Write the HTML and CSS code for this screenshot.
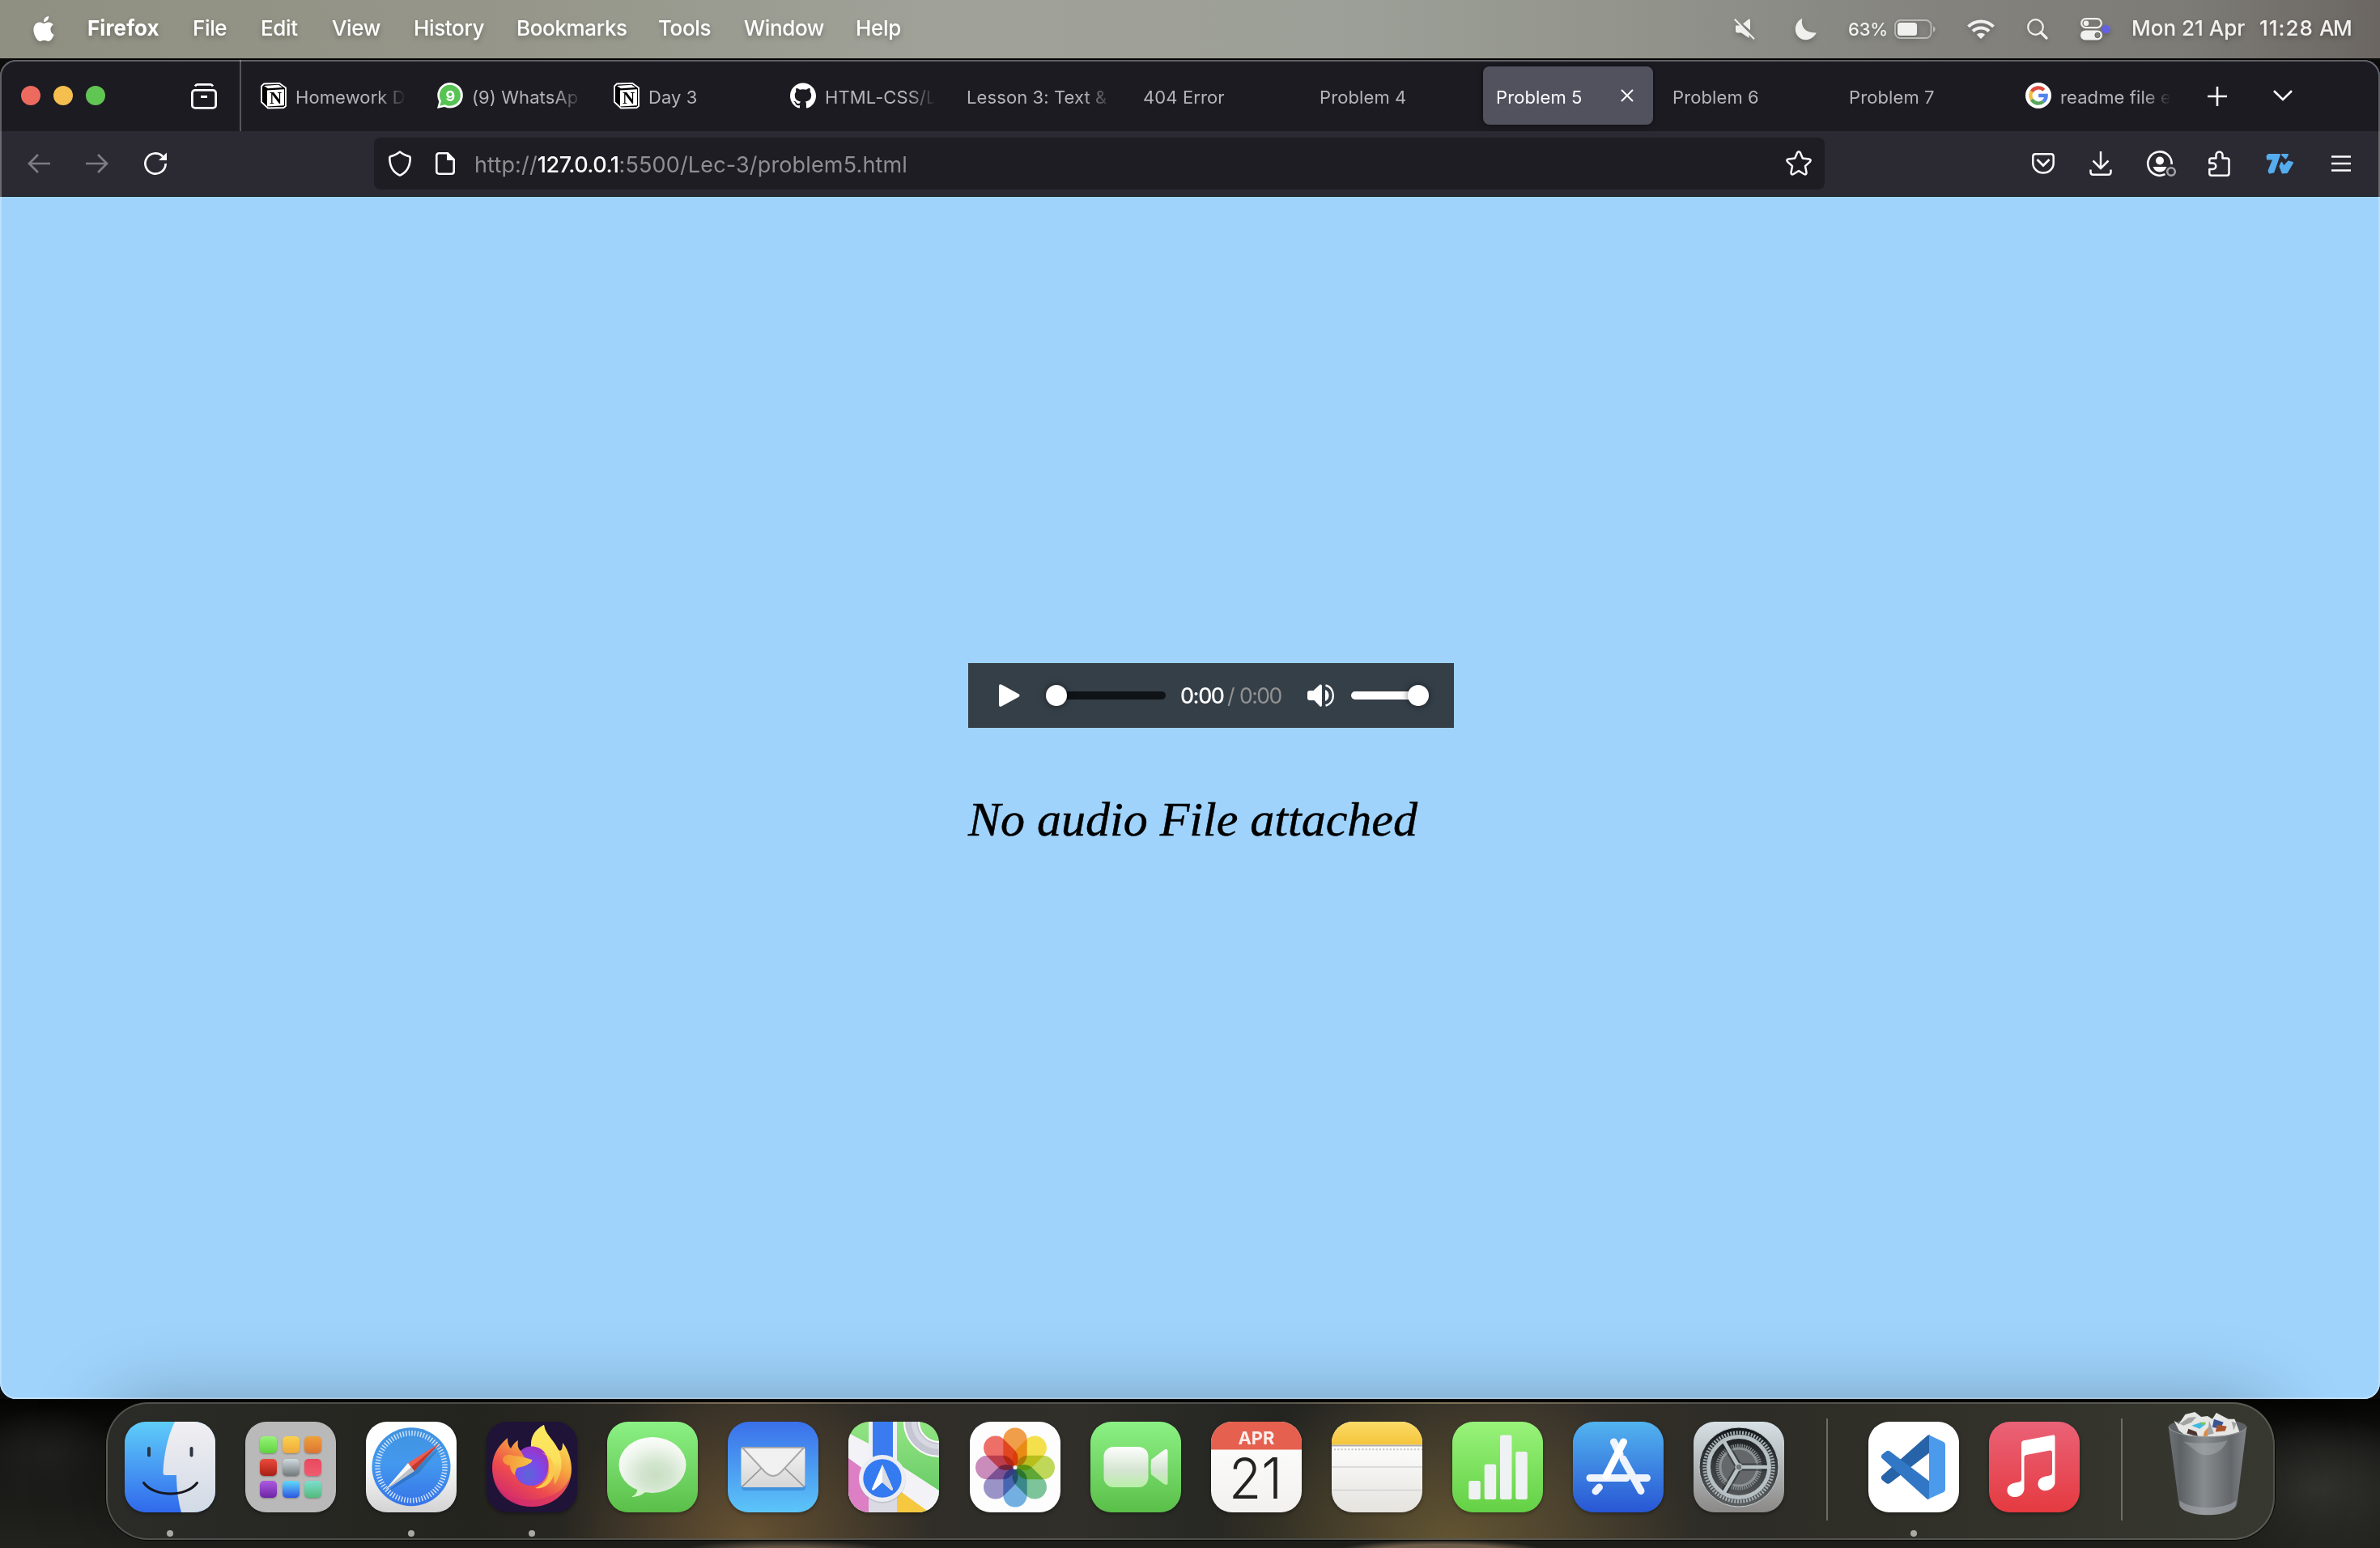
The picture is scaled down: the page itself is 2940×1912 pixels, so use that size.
FILE: index.html
```html
<!DOCTYPE html>
<html lang="en">
<head>
<meta charset="utf-8">
<title>Problem 5</title>
<link rel="stylesheet" href="styles.css">
</head>
<body>
<header class="menubar">
  <svg class="apple" viewBox="2 0 20 24" fill="#fff"><path d="M12.152 6.896c-.948 0-2.415-1.078-3.96-1.04-2.04.027-3.91 1.183-4.961 3.014-2.117 3.675-.546 9.103 1.519 12.09 1.013 1.454 2.208 3.09 3.792 3.039 1.52-.065 2.09-.987 3.935-.987 1.831 0 2.35.987 3.96.948 1.637-.026 2.676-1.48 3.676-2.948 1.156-1.688 1.636-3.325 1.662-3.415-.039-.013-3.182-1.221-3.22-4.857-.026-3.04 2.48-4.494 2.597-4.559-1.429-2.09-3.623-2.324-4.39-2.376-2-.156-3.675 1.09-4.61 1.09zM15.53 3.83c.843-1.012 1.4-2.427 1.245-3.83-1.207.052-2.662.805-3.532 1.818-.78.896-1.454 2.338-1.273 3.714 1.338.104 2.715-.688 3.559-1.701"/></svg>
  <nav class="menus">
    <span class="app-name">Firefox</span><span>File</span><span>Edit</span><span>View</span><span>History</span><span>Bookmarks</span><span>Tools</span><span>Window</span><span>Help</span>
  </nav>
  <div class="status">
    <svg class="mute" viewBox="0 0 26 26"><path d="M2 8.500H7.500L18.500 19.500V24L9 17.500H4.500Q2 17.500 2 15ZM11 6.500 18 .8Q20 0 20 2.500V14.500Z" fill="#f0f0ee"/><path d="M.8.8 25 25.200" stroke="#f0f0ee" stroke-width="2"/></svg>
    <svg class="moon" viewBox="0 0 28 28"><path d="M9.500.8C8.500 2 6 19 26.800 18.600 24 24 19.500 27.200 13.800 27.200 6.500 27.200.8 21.500.8 14.300.8 8.500 4 3 9.500.8Z" fill="#f0f0ee"/></svg>
    <span class="percent">63%</span>
    <svg class="battery" viewBox="0 0 52 24"><rect x="1" y="1" width="44.500" height="22" rx="6.500" fill="none" stroke="#b9b9b6" stroke-width="1.800"/><rect x="4" y="4" width="24" height="16" rx="3.500" fill="#f0f0ee"/><path d="M48 8.500C51.500 9.500 51.500 14.500 48 15.500Z" fill="#b9b9b6"/></svg>
    <svg class="wifi" viewBox="0 0 34 26" fill="none" stroke="#f0f0ee" stroke-width="4"><path d="M1.500 9.800A22 22 0 0 1 32.500 9.800"/><path d="M7 15.500A14.500 14.500 0 0 1 27 15.500"/><path d="M17 25 11.800 19.800A7.500 7.500 0 0 1 22.200 19.800Z" fill="#f0f0ee" stroke="none"/></svg>
    <svg class="search" viewBox="0 0 26 26" fill="none" stroke="#f0f0ee"><circle cx="10.500" cy="10.500" r="9.300" stroke-width="2.200"/><path d="M17 17 24 24" stroke-width="3.200" stroke-linecap="round"/></svg>
    <svg class="control" viewBox="0 0 38 28"><rect x="1.200" y="1.200" width="24.600" height="11" rx="5.500" fill="none" stroke="#f0f0ee" stroke-width="2.200"/><circle cx="7" cy="6.700" r="3.300" fill="#f0f0ee"/><rect y="15.500" width="27" height="12" rx="6" fill="#f0f0ee"/><circle cx="21" cy="21.500" r="3.200" fill="#83827d" stroke="#5d5c59" stroke-width=".8"/><circle cx="31.500" cy="14" r="5.200" fill="#6460e6"/></svg>
    <span class="date">Mon 21 Apr</span><span class="clock">11:28</span><span class="ampm">AM</span>
  </div>
</header>

<main class="window">
  <div class="tabbar">
    <div class="lights"><i class="red"></i><i class="yellow"></i><i class="green"></i></div>
    <svg class="fxview" viewBox="0 0 32 32" fill="none" stroke="#fbfbfe" stroke-width="2.800"><path d="M5 3.500Q6.200 1.400 8 1.400H24Q25.800 1.400 27 3.500" /><rect x="1.400" y="8.400" width="29.200" height="22" rx="3.500"/><path d="M12 16.500H20" stroke-width="3"/></svg>
    <div class="tabs">
      <div class="tab"><svg class="fav" viewBox="0 0 32 32"><path d="M1 4.500 4 1.500 23 .8 31 6.500V29L28.500 31 9 31.500 1 24Z" fill="#000" stroke="#fff" stroke-width="1.800" stroke-linejoin="round"/><path d="M8 9.500 29 8.300V28.300L8 29.500Z" fill="#fff"/><path d="M4 4 22 2.800 27 6 9 7.200Z" fill="#fff"/><text x="18.700" y="25.500" class="fav-n" text-anchor="middle">N</text></svg><span class="title">Homework D</span></div>
      <div class="tab"><svg class="fav" viewBox="0 0 32 32"><path d="M0 32 2.300 23.500A15.800 15.800 0 1 1 9 29.900Z" fill="#fff"/><path d="M3.300 28.800 5 22.800A13 13 0 1 1 9.800 27.200Z" fill="#57c353"/><text x="16.500" y="22.500" class="fav-9" text-anchor="middle">9</text></svg><span class="title">(9) WhatsAp</span></div>
      <div class="tab"><svg class="fav" viewBox="0 0 32 32"><path d="M1 4.500 4 1.500 23 .8 31 6.500V29L28.500 31 9 31.500 1 24Z" fill="#000" stroke="#fff" stroke-width="1.800" stroke-linejoin="round"/><path d="M8 9.500 29 8.300V28.300L8 29.500Z" fill="#fff"/><path d="M4 4 22 2.800 27 6 9 7.200Z" fill="#fff"/><text x="18.700" y="25.500" class="fav-n" text-anchor="middle">N</text></svg><span class="title">Day 3</span></div>
      <div class="tab"><svg class="fav" viewBox="0 0 24 24" fill="#fff"><path d="M12 .297c-6.630 0-12 5.373-12 12 0 5.303 3.438 9.800 8.205 11.385.6.113.82-.258.82-.577 0-.285-.01-1.040-.015-2.040-3.338.724-4.042-1.610-4.042-1.610C4.422 18.070 3.633 17.700 3.633 17.700c-1.087-.744.084-.729.084-.729 1.205.084 1.838 1.236 1.838 1.236 1.070 1.835 2.809 1.305 3.495.998.108-.776.417-1.305.76-1.605-2.665-.3-5.466-1.332-5.466-5.930 0-1.310.465-2.380 1.235-3.220-.135-.303-.54-1.523.105-3.176 0 0 1.005-.322 3.300 1.230.96-.267 1.980-.399 3-.405 1.020.006 2.040.138 3 .405 2.280-1.552 3.285-1.230 3.285-1.230.645 1.653.24 2.873.12 3.176.765.84 1.230 1.910 1.230 3.220 0 4.610-2.805 5.625-5.475 5.920.42.36.81 1.096.81 2.220 0 1.606-.015 2.896-.015 3.286 0 .315.21.69.825.57C20.565 22.092 24 17.592 24 12.297c0-6.627-5.373-12-12-12"/></svg><span class="title">HTML-CSS/L</span></div>
      <div class="tab"><span class="title">Lesson 3: Text &amp;</span></div>
      <div class="tab"><span class="title">404 Error</span></div>
      <div class="tab"><span class="title">Problem 4</span></div>
      <div class="tab active"><span class="title">Problem 5</span><svg class="close" viewBox="0 0 16 16" stroke="#fbfbfe" stroke-width="2"><path d="M1 1 15 15M15 1 1 15"/></svg></div>
      <div class="tab"><span class="title">Problem 6</span></div>
      <div class="tab"><span class="title">Problem 7</span></div>
      <div class="tab"><svg class="fav" viewBox="0 0 32 32" fill="none" stroke-width="4.400"><circle cx="16" cy="16" r="16" fill="#fff" stroke="none"/><path d="M22.800 9.200A9.600 9.600 0 0 0 7.700 11.200" stroke="#dc4b3e"/><path d="M7.700 11.200A9.600 9.600 0 0 0 7.700 20.800" stroke="#f2bd42"/><path d="M7.700 20.800A9.600 9.600 0 0 0 22.200 23.400" stroke="#58a55c"/><path d="M22.200 23.400A9.600 9.600 0 0 0 25.600 16H16.200" stroke="#5383ec"/></svg><span class="title">readme file e</span></div>
    </div>
    <svg class="plus" viewBox="0 0 24 24" stroke="#fbfbfe" stroke-width="2.600"><path d="M12 0V24M0 12H24"/></svg>
    <svg class="chev" viewBox="0 0 24 14" fill="none" stroke="#fbfbfe" stroke-width="2.600"><path d="M1 1.200 12 12 23 1.200"/></svg>
  </div>

  <div class="toolbar">
    <svg class="back" viewBox="0 0 28 24" fill="none" stroke="#7d7c82" stroke-width="2.700"><path d="M28 12H2M13 1 2 12 13 23"/></svg>
    <svg class="fwd" viewBox="0 0 28 24" fill="none" stroke="#7d7c82" stroke-width="2.700"><path d="M0 12H26M15 1 26 12 15 23"/></svg>
    <svg class="reload" viewBox="0 0 28 28" fill="none"><path d="M26.600 14A12.600 12.600 0 1 1 23 5.200" stroke="#fbfbfe" stroke-width="2.700"/><path d="M28 .5V10H18Z" fill="#fbfbfe"/></svg>
    <div class="urlbar">
      <svg class="shield" viewBox="0 0 28 32" fill="none" stroke="#fbfbfe" stroke-width="2.600"><path d="M14 1.500C18 4.500 22.500 6.500 25 7Q26.800 7.500 26.700 9.500C26.500 19 23.500 26.500 14 30.600 4.500 26.500 1.500 19 1.300 9.500Q1.200 7.500 3 7C5.500 6.500 10 4.500 14 1.500Z" stroke-linejoin="round"/></svg>
      <svg class="page" viewBox="0 0 24 28" fill="none" stroke="#fbfbfe" stroke-width="2.600"><path d="M4.300 1.300H15L22.700 9V23.700Q22.700 26.700 19.700 26.700H4.300Q1.300 26.700 1.300 23.700V4.300Q1.300 1.300 4.300 1.300Z"/><path d="M14.500 1V9.500H23Z" fill="#fbfbfe" stroke-width="1"/></svg>
      <span class="url">http://<b>127.0.0.1</b>:5500/Lec-3/problem5.html</span>
      <svg class="star" viewBox="0 0 32 31" fill="none" stroke="#fbfbfe" stroke-width="2.500" stroke-linejoin="round"><path d="M14.300 2.300Q16 0 17.700 2.300L20.800 9.600 28.700 10.500Q32 11.300 29.800 13.800L24 19.200 25.500 27Q25.500 30.500 22.500 29L16 25 9.500 29Q6.500 30.500 6.500 27L8 19.200 2.200 13.800Q0 11.300 3.300 10.500L11.200 9.600Z"/></svg>
    </div>
    <svg class="pocket" viewBox="0 0 28 26" fill="none" stroke="#fbfbfe" stroke-width="2.500"><path d="M4.500 1.300H23.500Q26.700 1.300 26.700 4.500V12.500A12.700 12 0 0 1 1.300 12.500V4.500Q1.300 1.300 4.500 1.300Z"/><path d="M6.500 8 14 15.500 21.500 8" stroke-width="2.800"/></svg>
    <svg class="download" viewBox="0 0 28 30" fill="none" stroke="#fbfbfe" stroke-width="2.500"><path d="M14 0V20M4.500 11.500 14 21 23.500 11.500M1.500 22.500V25.500Q1.500 28.700 4.500 28.700H23.500Q26.500 28.700 26.500 25.500V22.500"/></svg>
    <svg class="account" viewBox="0 0 36 32" fill="none"><path d="M30.600 17A14.700 14.700 0 1 0 22.500 29.200" stroke="#fbfbfe" stroke-width="2.600"/><circle cx="16" cy="12.500" r="5" fill="#fbfbfe"/><path d="M7.500 20H24.500Q22 26.500 16 26.500T7.500 20Z" fill="#fbfbfe"/><circle cx="30" cy="26" r="4.800" stroke="#a3a2a8" stroke-width="2.600"/></svg>
    <svg class="puzzle" viewBox="0 0 27 32" fill="none" stroke="#fbfbfe" stroke-width="2.500"><path d="M1.300 15.500V12Q1.300 9.500 3.800 9.500H9.500V5.500A4 4 0 0 1 17.500 5.500V9.500H23Q25.500 9.500 25.500 12V28Q25.500 30.700 23 30.700H3.800Q1.300 30.700 1.300 28V23H5.500A3.700 3.700 0 0 0 5.500 15.500Z" stroke-linejoin="round"/></svg>
    <svg class="ext" viewBox="0 0 34 26" fill="#55acee" stroke="#55acee" stroke-width="2" stroke-linejoin="round"><path d="M3 2H17L9.500 23.500 4.500 24.500 3.500 22 9.500 7.500H2L1.500 4Z"/><path d="M19.500 12 22 17 28 10.500 33 12 26 24 20.500 24.500 17.500 16.500Z"/><path d="M20 2H27L24.500 6.500Z"/></svg>
    <svg class="burger" viewBox="0 0 24 20" stroke="#fbfbfe" stroke-width="2.600"><path d="M0 1.500H24M0 10H24M0 18.500H24"/></svg>
  </div>

  <section class="page-body">
    <div class="player">
      <svg class="play" viewBox="0 0 26 28" fill="#fff"><path d="M3.500.8 24.500 12.300Q26.500 14 24.500 15.700L3.500 27.200Q0 29 0 25.500V2.500Q0-1 3.500.8Z"/></svg>
      <div class="scrub"><i></i></div>
      <span class="time">0:00</span><span class="dur">/</span><span class="dur total">0:00</span>
      <svg class="speaker" viewBox="0 0 33 28"><path d="M3 8H7.500L15.500.6Q18 0 18 2V26Q18 28.500 15.500 27.500L8.500 20H3Q0 20 0 17V11Q0 8 3 8Z" fill="#fff"/><path d="M22 7C28 9 28 19 22 21Z" fill="#fff"/><path d="M22.500 1.500C35 4 35 24 22.500 26.500" fill="none" stroke="#fff" stroke-width="2.400"/></svg>
      <div class="volume"><i></i></div>
    </div>
    <p class="message">No audio File attached</p>
  </section>
</main>

<footer class="dock-area">
  <div class="dock">
    <div class="app finder running"><svg viewBox="0 0 112 112"><defs><linearGradient id="fa" x2="0" y2="1"><stop stop-color="#5fcdf9"/><stop offset="1" stop-color="#3069ec"/></linearGradient><linearGradient id="fb" x2="0" y2="1"><stop stop-color="#f1eff2"/><stop offset="1" stop-color="#d1dae6"/></linearGradient></defs><rect width="112" height="112" fill="url(#fa)"/><path d="M62 0C52 20 48 45 47.500 63Q47.500 66 50 66H64C64 82 66 98 70 112H112V0Z" fill="url(#fb)"/><path d="M30 33V41.500M82.500 33V41.500" stroke="#2c3440" stroke-width="4" stroke-linecap="round"/><path d="M23.500 75.500C37 93.500 76 93.500 89.500 75.500" fill="none" stroke="#17191f" stroke-width="3" stroke-linecap="round"/></svg></div>
    <div class="app launchpad"><div class="pads"><i></i><i></i><i></i><i></i><i></i><i></i><i></i><i></i><i></i></div></div>
    <div class="app safari running"><svg viewBox="0 0 112 112"><defs><linearGradient id="sa" x2="0" y2="1"><stop stop-color="#4192de"/><stop offset=".45" stop-color="#4399ee"/><stop offset="1" stop-color="#3673e8"/></linearGradient></defs><circle cx="56" cy="55.700" r="48.500" fill="url(#sa)"/><circle cx="56" cy="55.700" r="41.500" fill="none" stroke="#d7e6f8" stroke-width="6.500" stroke-dasharray="1.400 2.222"/><path d="M26 87 93 30 66 63Z" fill="#000" opacity=".15"/><path d="M90.500 27 52 51 59.600 61Z" fill="#ee5b50"/><path d="M90.500 27 56 56 59.600 61Z" fill="#c23a2e"/><path d="M24 84 52 51 59.600 61Z" fill="#f7f7f7"/><path d="M24 84 56 56 59.600 61Z" fill="#bfc2c6"/></svg></div>
    <div class="app firefox running"><svg viewBox="0 0 112 112"><defs><linearGradient id="xa" x1=".85" y1=".1" x2=".3" y2="1"><stop stop-color="#fbea5d"/><stop offset=".35" stop-color="#f6a43e"/><stop offset=".68" stop-color="#ee4b4e"/><stop offset="1" stop-color="#d0296f"/></linearGradient><radialGradient id="xb" cx=".4" cy=".72" r=".7"><stop stop-color="#5a67d6"/><stop offset=".5" stop-color="#7a4bea"/><stop offset="1" stop-color="#9a35c8"/></radialGradient><linearGradient id="xc" x2="0" y2="1"><stop stop-color="#fceb60"/><stop offset=".6" stop-color="#fbdf5c"/><stop offset="1" stop-color="#f6a843"/></linearGradient><linearGradient id="xd" x2="1" y2="0"><stop stop-color="#f4923b"/><stop offset="1" stop-color="#f7c545"/></linearGradient></defs><path d="M26 20C26 26 27 30 30 33 33 28 35 25 39 23 38 29 39 33 42 36L55 32C54 18 60 10 71 4 72 14 80 20 86 30 91 40 94 36 94 26 102 36 105 50 105 58 105 86 82 105 56 105 28 105 7 84 7 57 7 42 14 30 26 20Z" fill="url(#xa)"/><path d="M55 34C54 18 60 10 71 4 72 14 80 20 86 30 96 46 94 64 84 78 82 60 84 48 64 36Z" fill="url(#xc)"/><path d="M42 36C50 28 64 29 71 37 78 46 78 60 73 69 68 77 61 79 55 79 43 79 35 70 35 60L38 50 48 46Z" fill="url(#xb)"/><path d="M66 38C74 40 78 44 77 54 79 66 73 77 60 82 72 84 84 74 84 58 82 48 78 40 66 38Z" fill="#fbc94c"/><path d="M20 47C20 42 27 39 33 42L43 43 56 47Q57 49 54 51C48 55 42 56 38 57 36 60 35 62 35 66 30 62 29 57 29 54 24 54 21 51 20 47Z" fill="url(#xd)"/><path d="M8 65C12 90 38 99 60 96 82 94 98 84 104 66 100 90 80 105 56 105 31 105 10 90 8 65Z" fill="#d02c6c" opacity=".5"/></svg></div>
    <div class="app messages"><svg viewBox="0 0 112 112"><defs><radialGradient id="ma" cx=".55" cy=".68" r=".65"><stop stop-color="#c9dfc4"/><stop offset=".35" stop-color="#d3e5cf"/><stop offset=".8" stop-color="#f1f7ef"/><stop offset="1" stop-color="#f8fcf7"/></radialGradient></defs><path d="M30 93C36 90 38 86 37 81L48 86C43 91 36 93 30 93Z" fill="#d8f5cf"/><ellipse cx="56" cy="53.500" rx="41.500" ry="34.500" fill="url(#ma)"/></svg></div>
    <div class="app mail"><svg viewBox="0 0 112 112"><defs><linearGradient id="ea" x2="0" y2="1"><stop stop-color="#f4f4f4"/><stop offset="1" stop-color="#d6d6d6"/></linearGradient></defs><rect x="17" y="34" width="79" height="51" rx="4" fill="#1f5fae" opacity=".35"/><rect x="16.500" y="31" width="79" height="50" rx="4" fill="url(#ea)"/><path d="M18 80 42 57M94 80 70 57" stroke="#8f8f8f" stroke-width="1.500"/><path d="M18 32 46 62Q56 72 66 62L94 32Z" fill="#f1f1f1" stroke="#a9a9a9" stroke-width="2" stroke-linejoin="round"/></svg></div>
    <div class="app maps"><svg viewBox="0 0 112 112"><defs><linearGradient id="pa" x2="0" y2="1"><stop stop-color="#93e583"/><stop offset="1" stop-color="#5dc55f"/></linearGradient></defs><rect width="112" height="112" fill="url(#pa)"/><path d="M0 14 25 27 69 57 112 85V112H0Z" fill="#f3f3f7"/><path d="M0 45 25 63V112H0Z" fill="#dd7fc4"/><path d="M60 83 67 88 100 112H60Z" fill="#f5c83f"/><path d="M25 0H60V112H25Z" fill="#f1f1f5"/><path d="M25 88H60V112H25Z" fill="#dadae2"/><path d="M30 0H55V60H30Z" fill="#3a7cf0"/><circle cx="112" cy="0" r="34" fill="none" stroke="#fff" stroke-width="20"/><circle cx="112" cy="0" r="34" fill="none" stroke="#c5c6d2" stroke-width="16"/><circle cx="112" cy="0" r="31" fill="none" stroke="#d7d8e2" stroke-width="6"/><circle cx="42" cy="71.500" r="29" fill="#9a9aa5" opacity=".4"/><circle cx="42" cy="70" r="29" fill="#ecedf3"/><circle cx="42" cy="70" r="23.700" fill="#347af0"/><path d="M42 53 29 83Q29 86 32 84L42 75 52 84Q55 86 55 83Z" fill="#fff"/><path d="M42 53 55 83Q55 86 52 84L42 75Z" fill="#d9dbe2"/></svg></div>
    <div class="app photos"><svg viewBox="0 0 112 112"><g class="petals"><rect x="41.300" y="7.500" width="29.400" height="48" rx="14.700" fill="#f2973a"/><rect x="41.300" y="7.500" width="29.400" height="48" rx="14.700" fill="#f6e03c" transform="rotate(45 56 56.500)"/><rect x="41.300" y="7.500" width="29.400" height="48" rx="14.700" fill="#bcd74d" transform="rotate(90 56 56.500)"/><rect x="41.300" y="7.500" width="29.400" height="48" rx="14.700" fill="#74c192" transform="rotate(135 56 56.500)"/><rect x="41.300" y="7.500" width="29.400" height="48" rx="14.700" fill="#69abe1" transform="rotate(180 56 56.500)"/><rect x="41.300" y="7.500" width="29.400" height="48" rx="14.700" fill="#938bc6" transform="rotate(225 56 56.500)"/><rect x="41.300" y="7.500" width="29.400" height="48" rx="14.700" fill="#c783b8" transform="rotate(270 56 56.500)"/><rect x="41.300" y="7.500" width="29.400" height="48" rx="14.700" fill="#ee645c" transform="rotate(315 56 56.500)"/></g><circle cx="56" cy="56.500" r="2.500" fill="#f2f0e8"/></svg></div>
    <div class="app facetime"><svg viewBox="0 0 112 112"><defs><linearGradient id="ta" x2="0" y2="1"><stop stop-color="#fdfefd"/><stop offset=".6" stop-color="#d3e4d0"/><stop offset="1" stop-color="#b9f0a8"/></linearGradient></defs><rect x="16.500" y="31" width="55" height="50" rx="12" fill="url(#ta)"/><path d="M75 47 90 35.500Q95.500 32 95.500 37V75Q95.500 80 90 76.500L75 65Q74 56 75 47Z" fill="url(#ta)"/></svg></div>
    <div class="app calendar"><svg viewBox="0 0 112 112"><rect width="112" height="34.500" fill="#e5604f"/><text x="56" y="27.500" class="month" text-anchor="middle" textLength="45" lengthAdjust="spacingAndGlyphs">APR</text><text x="22" y="95" class="day" textLength="66" lengthAdjust="spacingAndGlyphs">21</text></svg></div>
    <div class="app notes"><svg viewBox="0 0 112 112"><defs><linearGradient id="na" x2="0" y2="1"><stop stop-color="#fbdb67"/><stop offset="1" stop-color="#f5c53b"/></linearGradient></defs><rect width="112" height="28.500" fill="url(#na)"/><rect y="28.500" width="112" height="2" fill="#aeadab"/><path d="M3 34.200H112" stroke="#c4c3c1" stroke-width="2" stroke-dasharray="2 2.300"/><path d="M0 56H112M0 84.500H112" stroke="#d2d2d4" stroke-width="1.600"/></svg></div>
    <div class="app numbers"><svg viewBox="0 0 112 112" fill="#eff2f2"><rect x="20.300" y="73" width="14.500" height="23" rx="2.500"/><rect x="39.700" y="52.500" width="14.500" height="43.500" rx="2.500"/><rect x="59" y="16.500" width="14.500" height="79.500" rx="2.500"/><rect x="78.300" y="37" width="14.500" height="59" rx="2.500"/></svg></div>
    <div class="app appstore"><svg viewBox="0 0 112 112" fill="none" stroke="#eff4fc" stroke-width="9" stroke-linecap="round"><path d="M50.500 25 58 40"/><path d="M21 69.500H66M79 69.500H91.500" /><path d="M62.500 25 41 67" stroke="#fff"/><path d="M32.500 81 28 86"/><path d="M62 46 84 85.500"/></svg></div>
    <div class="app settings"><svg viewBox="0 0 112 112" fill="none"><defs><linearGradient id="ga" x2="0" y2="1"><stop stop-color="#14181b"/><stop offset="1" stop-color="#5c5f60"/></linearGradient></defs><circle cx="56" cy="56" r="49" fill="url(#ga)" stroke="#c3cacd" stroke-width="1"/><circle cx="56" cy="56" r="42.500" stroke="#a7b0b4" stroke-width="4.500" stroke-dasharray="2 1.709"/><circle cx="56" cy="56" r="37.500" stroke="#b6bfc3" stroke-width="5"/><circle cx="56" cy="56" r="26" stroke="#868d90" stroke-width="5" stroke-dasharray="1.500 1.222"/><circle cx="56" cy="56" r="23" fill="#65686a" stroke="#8b9295" stroke-width="3"/><path d="M56 56H91M56 56 38.500 25.700M56 56 38.500 86.300" stroke="#1a1d1f" stroke-width="9" opacity=".5"/><path d="M56 56H92M56 56 38 25M56 56 38 87" stroke="#b9c2c6" stroke-width="4.500"/><circle cx="56" cy="56" r="4" fill="#6e7678" stroke="#b9c2c6" stroke-width="1.500"/></svg></div>
    <i class="divider"></i>
    <div class="app vscode running"><svg viewBox="0 0 112 112"><path d="M73 17 16.500 67Q15 69.500 17 72L22 76Q24 77.500 26.500 76L76 38V16Z" fill="#2763a8"/><path d="M16.500 45 73 96 76 95V74L26.500 36.500Q24 35 22 36.500L17 40.500Q15 43 16.500 45Z" fill="#3277c6"/><path d="M75 16.500 93 25Q95 26 95 29V83Q95 86 93 87L73 96Q75 95 75 92Z" fill="#4b9aec"/></svg></div>
    <div class="app music"><svg viewBox="0 0 112 112" fill="#fff"><path d="M40 27Q40 24 43 23.200L79 16.400Q81.500 16 81.500 19V75C81.500 80 77 84 71 85 65 86 60.500 82 60.500 77 60.500 71.500 64.500 68.500 70 67.500L75 66.500Q78 66 78 63V38Q78 35 75 35.600L46 41Q43.500 41.500 43.500 44V83C43.500 88 39 92.500 33 93 27 93.500 22.500 90 22.500 85 22.500 79.500 26.500 76.500 32 75.500L37 74.500Q40 74 40 71Z"/></svg></div>
    <i class="divider second"></i>
    <svg class="trash" viewBox="0 0 100 132"><defs><linearGradient id="ra" x2="1" y2="0"><stop stop-color="#70757a"/><stop offset=".15" stop-color="#5f6468"/><stop offset=".45" stop-color="#8b9094"/><stop offset=".8" stop-color="#65696d"/><stop offset="1" stop-color="#85898e"/></linearGradient></defs><ellipse cx="50" cy="20" rx="49" ry="11" fill="#5d6165"/><path d="M8 12 14 16 22 4 34 1 42 7 50 6 56 10 61 2 76 10 84 10 90 26 70 32H24L14 24Z" fill="#e6e6e4"/><path d="M15 16 26 8 36 7 30 14 20 18ZM52 12 58 28 50 30ZM80 13 86 15 83 24Z" fill="#a2a3a3"/><path d="M30 18 42 14 48 16 40 22Z" fill="#41b9e0"/><path d="M40 14 48 14 45 18Z" fill="#78c846"/><path d="M58 10 70 14 66 22 56 20Z" fill="#3a5692"/><path d="M62 17 74 19 72 25 60 26Z" fill="#a8542c"/><path d="M26 22 36 26 38 32 24 28Z" fill="#4a3430"/><path d="M46 26 51 20 50 33 44 33Z" fill="#d98b4c"/><path d="M1 20C10 36 90 36 99 20L87 116C84 135 17 135 14 116Z" fill="url(#ra)" opacity=".96"/><path d="M20 38C40 42 70 40 75 36 70 52 50 60 38 52Z" fill="#b4b8ba" opacity=".4"/><path d="M15 112C30 124 70 124 86 112L85 118C80 134 20 134 15 118Z" fill="#a5a9ae" opacity=".6"/><path d="M1 20C10 36 90 36 99 20" fill="none" stroke="#999ea2" stroke-width="1"/></svg>
  </div>
</footer>
</body>
</html>
```
FILE: styles.css
```css
* { box-sizing: border-box; }
html, body { margin: 0; height: 1912px; }
body {
  width: 2940px;
  display: flex;
  flex-direction: column;
  overflow: hidden;
  background: #0c0c0a;
  font-family: Inter, "Liberation Sans", sans-serif;
}
svg { display: block; flex: none; overflow: visible; }
span { white-space: pre; }

/* menu bar */
.menubar {
  height: 72px;
  flex: none;
  display: flex;
  align-items: center;
  padding-left: 41px;
  color: #fff;
  font-size: 26px;
  font-weight: 500;
  line-height: 70px;
  background: linear-gradient(90deg, #8f9082 0%, #96978a 22%, #a0a198 40%, #9da098 56%, #93958d 68%, #83827d 82%, #7c7b76 92%, #6b6661 100%);
}
.menubar span { text-shadow: 0 3px 6px rgba(0, 0, 0, .28); }
.menubar svg { filter: drop-shadow(0 3px 3px rgba(0, 0, 0, .22)); }
.apple { width: 26px; height: 31px; margin-top: -2px; }
.menus {
  display: grid;
  grid-template-columns: 130px 84px 88px 101px 127px 175px 106px 138px 80px;
  margin: -2px 0 0 41px;
  letter-spacing: -.35px;
}
.menus .app-name { font-weight: 700; letter-spacing: .1px; }
.status { display: flex; align-items: center; margin-left: auto; padding-right: 2px; color: #f2f2f0; }
.status span { margin-top: -2px; }
.mute { width: 26px; height: 26px; }
.moon { width: 28px; height: 28px; margin-left: 49px; }
.status .percent { width: 57px; margin: 0 0 0 38px; font-size: 22px; letter-spacing: -.2px; }
.battery { width: 52px; height: 24px; }
.wifi { width: 34px; height: 26px; margin-left: 38px; }
.search { width: 26px; height: 26px; margin-left: 40px; }
.control { width: 38px; height: 28px; margin-left: 40px; }
.date { width: 158px; margin-left: 25px; }
.clock { width: 74px; letter-spacing: 1px; }
.ampm { width: 73px; letter-spacing: -1.500px; }

/* browser window */
.window {
  position: relative;
  height: 1654px;
  flex: none;
  margin-top: 2px;
  display: flex;
  flex-direction: column;
  border-radius: 20px;
  overflow: hidden;
  background: #9fd3fb;
  box-shadow: 0 0 0 1px #000;
}
.window::after {
  content: "";
  position: absolute;
  inset: 0;
  border-radius: 20px;
  border: 2px solid rgba(255, 255, 255, .3);
}
.tabbar {
  height: 88px;
  flex: none;
  display: flex;
  align-items: center;
  padding-left: 26px;
  background: #1c1b22;
}
.lights { display: flex; gap: 16px; }
.lights i { width: 24px; height: 24px; border-radius: 50%; }
.red { background: #ed6a5e; }
.yellow { background: #f4bf4f; }
.green { background: #61c554; }
.fxview { width: 32px; height: 32px; margin: 1px 0 0 106px; }
.tabs {
  display: flex;
  align-items: center;
  gap: 8px;
  height: 88px;
  margin-left: 28px;
  padding-left: 8px;
  border-left: 2px solid #56555b;
}
.tab {
  width: 210px;
  height: 72px;
  display: flex;
  align-items: center;
  padding: 0 16px;
  border-radius: 8px;
  color: #b5b4b9;
  font-size: 22px;
  letter-spacing: .1px;
}
.fav { width: 32px; height: 32px; margin-right: 11px; }
.fav-n { font: bold 21px "Liberation Serif", serif; fill: #000; }
.fav-9 { font: bold 18px Inter, sans-serif; fill: #fff; }
.title {
  flex: 1;
  min-width: 0;
  line-height: 30px;
  padding-top: 3px;
  -webkit-mask-image: linear-gradient(90deg, #000 calc(100% - 32px), transparent calc(100% + 2px));
  mask-image: linear-gradient(90deg, #000 calc(100% - 32px), transparent calc(100% + 2px));
}
.tab.active { background: #52525e; color: #fbfbfe; box-shadow: 0 0 6px rgba(0, 0, 0, .6); }
.active .title { -webkit-mask-image: none; mask-image: none; }
.close { width: 16px; height: 16px; margin-right: 8px; }
.plus { width: 24px; height: 24px; margin: 2px 0 0 31px; }
.chev { width: 24px; height: 14px; margin-left: 57px; }

.toolbar {
  height: 81px;
  flex: none;
  display: flex;
  align-items: center;
  padding: 0 0 1px 34px;
  background: #2b2a33;
  border-bottom: 1px solid #0c0c0d;
}
.back { width: 28px; height: 24px; }
.fwd { width: 28px; height: 24px; margin-left: 44px; }
.reload { width: 28px; height: 28px; margin-left: 44px; }
.urlbar {
  width: 1792px;
  height: 64px;
  flex: none;
  display: flex;
  align-items: center;
  margin-left: 256px;
  padding: 0 16px 0 18px;
  border-radius: 8px;
  background: #1e1d23;
}
.shield { width: 28px; height: 32px; }
.page { width: 24px; height: 28px; margin-left: 30px; }
.url { margin-left: 24px; padding-top: 3px; font-size: 27px; letter-spacing: .15px; color: #8f8e93; }
.url b { color: #fbfbfe; font-weight: 500; letter-spacing: -.5px; }
.star { width: 32px; height: 31px; margin-left: auto; }
.pocket { width: 28px; height: 26px; margin-left: 256px; }
.download { width: 28px; height: 30px; margin-left: 43px; }
.account { width: 36px; height: 32px; margin-left: 43px; }
.puzzle { width: 27px; height: 32px; margin-left: 40px; }
.ext { width: 34px; height: 26px; margin-left: 44px; }
.burger { width: 24px; height: 20px; margin-left: 47px; }

.page-body {
  flex: 1;
  padding: 576px 0 0 1196px;
  background: #9fd3fb;
}
.player {
  width: 600px;
  height: 80px;
  display: flex;
  align-items: center;
  padding-left: 38px;
  background: #353f48;
  color: #fff;
  font-size: 26.500px;
}
.play { width: 26px; height: 28px; }
.scrub, .volume { height: 10px; border-radius: 5px; flex: none; display: flex; align-items: center; }
.scrub { width: 148px; margin-left: 32px; background: #0f1316; }
.volume { width: 96px; margin-left: 21px; background: #fff; justify-content: flex-end; }
.scrub i, .volume i { width: 26px; height: 26px; border-radius: 50%; background: #fff; box-shadow: 0 0 8px rgba(0, 0, 0, .55); }
.time { width: 58px; margin-left: 18px; letter-spacing: -1.500px; font-weight: 500; }
.dur { width: 15px; color: #929292; letter-spacing: -1.500px; }
.total { width: 84px; }
.speaker { width: 33px; height: 28px; }
.message {
  margin: 77px 0 0;
  font: italic 60px/72px "Liberation Serif", "Times New Roman", serif;
  color: #000;
  -webkit-text-stroke: .5px #000;
  white-space: nowrap;
}

/* dock */
.dock-area {
  position: relative;
  height: 184px;
  flex: none;
  padding: 4px 130px 10px 131px;
  background:
    radial-gradient(ellipse 130px 14px at 970px 188px, #6d5c4a 40%, transparent),
    radial-gradient(ellipse 130px 14px at 1780px 188px, #7c6853 60%, transparent),
    radial-gradient(ellipse 90px 60px at 60px 70px, #20201e, transparent),
    radial-gradient(ellipse 160px 90px at 2860px 110px, #32332e, transparent),
    linear-gradient(180deg, #040403 0, #151513 35%, #22221e 100%);
}
.dock {
  height: 170px;
  display: flex;
  align-items: flex-start;
  padding: 22px 0 0 21px;
  border: 2px solid rgba(255, 255, 255, .18);
  border-radius: 52px;
  box-shadow: 0 0 90px 4px rgba(0, 0, 0, .26), 0 0 0 1px #0a0a09;
  background:
    radial-gradient(ellipse 230px 210px at 790px 170px, rgba(112, 88, 52, .85), transparent),
    radial-gradient(ellipse 300px 210px at 1660px 170px, rgba(108, 92, 52, .85), transparent),
    linear-gradient(90deg, #2b2b27 0%, #24241f 17%, #302c26 30%, #302f2a 45%, #232420 54%, #35302a 66%, #2d2c26 76%, #37382f 100%);
}
.app {
  position: relative;
  width: 112px;
  height: 112px;
  flex: none;
  margin-right: 37.080px;
}
.app > svg, .pads { width: 112px; height: 112px; border-radius: 26px; overflow: hidden; box-shadow: 0 2px 4px rgba(0, 0, 0, .35); }
.running::after {
  content: "";
  position: absolute;
  left: 52px;
  top: 134px;
  width: 8px;
  height: 8px;
  border-radius: 50%;
  background: #a9a9a5;
}
.pads {
  display: grid;
  grid-template-columns: repeat(3, 21px);
  grid-auto-rows: 21px;
  gap: 6.500px;
  padding: 18px;
  background: #b9b9b9;
}
.pads i { border-radius: 5px; box-shadow: 0 1px 2px rgba(0, 0, 0, .3); }
.pads i:nth-child(1) { background: linear-gradient(#98f37a, #5fd23e); }
.pads i:nth-child(2) { background: linear-gradient(#f9d14f, #f0a93a); }
.pads i:nth-child(3) { background: linear-gradient(#efa13a, #dc7434); }
.pads i:nth-child(4) { background: linear-gradient(#ea4b3c, #a92015); }
.pads i:nth-child(5) { background: linear-gradient(#cfdbe0, #73787a); }
.pads i:nth-child(6) { background: linear-gradient(#e9485e, #ef5c70); }
.pads i:nth-child(7) { background: linear-gradient(#ad5ae0, #6d26a5); }
.pads i:nth-child(8) { background: linear-gradient(#61dafb, #2c55e2); }
.pads i:nth-child(9) { background: linear-gradient(#7ddfcf, #54b97c); }
.safari > svg { background: linear-gradient(#fff 40%, #d3d3d3); }
.firefox > svg { background: #1f1338; }
.messages > svg, .facetime > svg { background: linear-gradient(#8cf184, #5abf49); }
.mail > svg { background: linear-gradient(#3a70ea, #5cc5f8); }
.photos > svg { background: #fdfdfd; }
.petals rect { mix-blend-mode: multiply; opacity: .92; }
.calendar > svg { background: linear-gradient(#fff, #f2f1ef); }
.month { font: 700 22px Inter, sans-serif; fill: #fbeeec; }
.day { font: 300 70px Inter, sans-serif; fill: #222; }
.notes > svg { background: linear-gradient(#fbfbfa 30%, #e5e3de); }
.numbers > svg { background: linear-gradient(#98f37a, #64d045); }
.appstore > svg { background: linear-gradient(#52b3ef, #2856d4); }
.settings > svg { background: linear-gradient(#d7e1e6, #8b8987); }
.vscode > svg { background: #fff; }
.music > svg { background: linear-gradient(#ea6277, #e53a40); }
.divider {
  width: 2px;
  height: 126px;
  flex: none;
  margin: -4px 50px 0 14.500px;
  background: #6d6d66;
}
.divider.second { margin: -4px 55px 0 14.500px; }
.trash { width: 100px; height: 130px; margin-top: -13px; }
```
